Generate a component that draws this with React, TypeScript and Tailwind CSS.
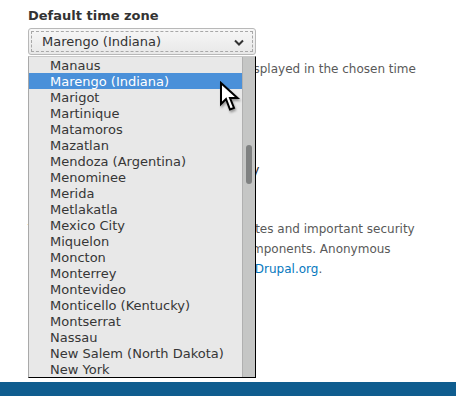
import React from "react";

const zones = [
  "Manaus",
  "Marengo (Indiana)",
  "Marigot",
  "Martinique",
  "Matamoros",
  "Mazatlan",
  "Mendoza (Argentina)",
  "Menominee",
  "Merida",
  "Metlakatla",
  "Mexico City",
  "Miquelon",
  "Moncton",
  "Monterrey",
  "Montevideo",
  "Monticello (Kentucky)",
  "Montserrat",
  "Nassau",
  "New Salem (North Dakota)",
  "New York",
];

const selected = "Marengo (Indiana)";

function Checkbox({ label }: { label: string }) {
  return (
    <div className="flex h-[20px] items-center gap-[7px]">
      <span className="h-[13px] w-[13px] rounded-[2px] border border-[#b8b8b8] bg-white" />
      <span className="text-[13px] text-[#333]">{label}</span>
    </div>
  );
}

export default function App() {
  return (
    <div className="relative flex h-[396px] w-[456px] flex-col overflow-hidden bg-white font-['DejaVu_Sans',sans-serif]">
      <div className="flex-1 pl-[28px] pt-[8px]">
        <div className="text-[13px] font-bold leading-[16px] text-[#333]">Default time zone</div>

        {/* closed select */}
        <div className="mt-[4px] h-[27px] w-[228px] rounded-[3px] border border-[#b8b8b8] bg-gradient-to-b from-[#f7f7f7] to-[#e8e8e8] p-[2px]">
          <div className="flex h-full items-center justify-between border border-dashed border-[#a8a8a8] pl-[10px] pr-[8px] pt-[1px]">
            <span className="text-[13px] text-[#333]">{selected}</span>
            <svg width="10" height="7" viewBox="0 0 10 7">
              <polyline points="1,1.5 5,5.5 9,1.5" fill="none" stroke="#333" strokeWidth="2" />
            </svg>
          </div>
        </div>

        <div className="mt-[4px] whitespace-nowrap text-[12px] leading-[20px] text-[#595959]">
          <div>By default, dates in this site will be displayed in the chosen time</div>
          <div>zone.</div>
        </div>

        <div className="mt-[26px] text-[13px] font-bold leading-[20px] text-[#333]">Update notifications</div>
        <div className="mt-[15px]">
          <Checkbox label="Check for updates automatically" />
          <Checkbox label="Receive email notifications" />
        </div>

        <div className="mt-[19px] whitespace-nowrap text-[12px] leading-[20px] text-[#595959]">
          <div>The system will notify you when updates and important security</div>
          <div>releases are available for installed components. Anonymous</div>
          <div>
            information about your site is sent to <span className="text-[#0678be]">Drupal.org</span>.
          </div>
        </div>
      </div>

      <div className="h-[14px] bg-[#0f5d8f]" />

      {/* open dropdown list */}
      <div className="absolute left-[28px] top-[56px] flex h-[322px] w-[228px] border-b border-l border-r border-t border-b-black border-l-[#a9a9a9] border-r-black border-t-[#c8c8c8] bg-[#e8e8e8]">
        <div className="flex-1">
          {zones.map((z) => (
            <div
              key={z}
              className={`h-[16px] pl-[21px] pt-[1px] text-[13px] leading-[16px] ${
                z === selected ? "bg-[#4a90d9] text-white" : "text-[#363636]"
              }`}
            >
              {z}
            </div>
          ))}
        </div>
        <div className="w-[13px] border-l border-[#b0b0b0] bg-[#c5c6c5] pl-[3px] pt-[88px]">
          <div className="h-[39px] w-[6px] rounded-full bg-[#7f8181]" />
        </div>
      </div>

      {/* mouse pointer */}
      <svg
        className="absolute left-[219px] top-[81px] drop-shadow-[1px_2px_1px_rgba(0,0,0,0.35)]"
        width="22"
        height="32"
        viewBox="0 0 22 32"
      >
        <path
          d="M2 2 L2 23 L7 18 L11 28.5 L15 27 L11 17 L18.5 17 Z"
          fill="#fff"
          stroke="#000"
          strokeWidth="2"
          strokeLinejoin="miter"
        />
      </svg>
    </div>
  );
}
